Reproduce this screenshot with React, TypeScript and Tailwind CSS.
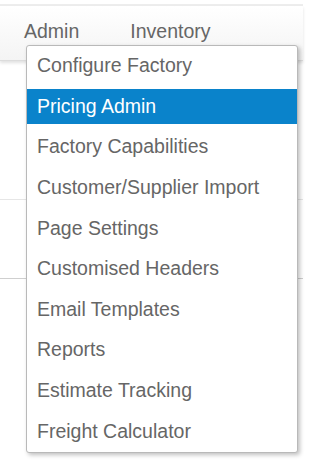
const items = [
  "Configure Factory",
  "Pricing Admin",
  "Factory Capabilities",
  "Customer/Supplier Import",
  "Page Settings",
  "Customised Headers",
  "Email Templates",
  "Reports",
  "Estimate Tracking",
  "Freight Calculator",
];

const App = () => {
  return (
    <div className="w-[309px] h-[463px] bg-white overflow-hidden font-['Liberation_Sans',Arial,sans-serif]">
      <div className="relative w-[303px] h-full">
        {/* top strip */}
        <div className="h-[4px] bg-white" />
        <div className="h-[2px] bg-[#ededed]" />
        {/* nav bar */}
        <div className="h-[55px] bg-gradient-to-b from-white to-[#f4f4f4] border-b border-[#dcdcdc] shadow-[0_2px_3px_rgba(0,0,0,0.12)] flex items-start pt-[16px] pl-[24px] text-[19.5px] leading-none text-[#666]">
          <span>Admin</span>
          <span className="ml-[51px]">Inventory</span>
        </div>

        {/* page lines behind menu */}
        <div className="mt-[138px] h-px bg-[#e6e6e6]" />
        <div className="mt-[78px] h-px bg-[#cfcfcf]" />

        {/* dropdown */}
        <div className="absolute left-[26px] top-[45px] w-[272px] h-[408px] bg-white border border-[#b9b9b9] rounded-[3px] shadow-[2px_2px_4px_rgba(0,0,0,0.25)] pt-[2.5px]">
          <ul className="flex flex-col gap-[5.6px]">
            {items.map((item) => (
              <li
                key={item}
                className={
                  item === "Pricing Admin"
                    ? "h-[35px] flex items-center pl-[10px] text-[19.5px] leading-none text-white bg-[#0a83cb]"
                    : "h-[35px] flex items-center pl-[10px] text-[19.5px] leading-none text-[#666]"
                }
              >
                {item}
              </li>
            ))}
          </ul>
        </div>
      </div>
    </div>
  );
};

export default App;
